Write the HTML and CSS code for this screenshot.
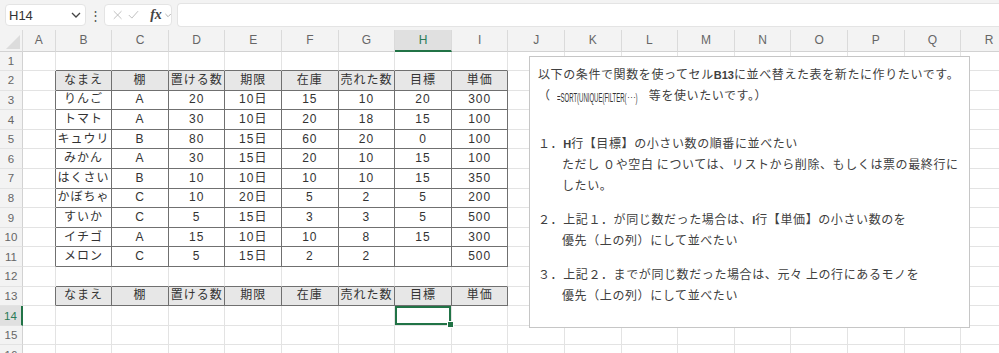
FILE: index.html
```html
<!DOCTYPE html>
<html lang="ja">
<head>
<meta charset="UTF-8">
<meta name="viewport" content="width=device-width, initial-scale=1.0">
<title>Sheet1</title>
<link rel="stylesheet" href="styles.css">
</head>
<body>
  <div class="bar">
    <div class="namebox">
      <span>H14</span>
      <svg width="10" height="6" viewBox="0 0 10 6"><polyline points="1,1 5,5 9,1" fill="none" stroke="#444" stroke-width="1.3"/></svg>
    </div>
    <div class="dots">⋮</div>
    <div class="fxbox">
      <svg width="12" height="12" viewBox="0 0 12 12"><path d="M1 1 L11 11 M11 1 L1 11" stroke="#b5b5b5" stroke-width="1.1"/></svg>
      <svg width="14" height="12" viewBox="0 0 14 12"><polyline points="1,6 5,10 13,1" fill="none" stroke="#b5b5b5" stroke-width="1.1"/></svg>
      <i class="fx">fx</i>
      <svg width="8" height="5" viewBox="0 0 8 5"><polyline points="0.5,0.5 4,4 7.5,0.5" fill="none" stroke="#999" stroke-width="1"/></svg>
    </div>
    <div class="input"></div>
  </div>

  <table class="sheet">
    <colgroup>
      <col class="w-rh"><col class="w-a">
      <col class="w"><col class="w"><col class="w"><col class="w"><col class="w"><col class="w"><col class="w"><col class="w"><col class="w">
      <col class="w"><col class="w"><col class="w"><col class="w"><col class="w"><col class="w"><col class="w"><col class="w">
    </colgroup>
    <tr class="head">
      <th class="corner"><span class="tri"></span></th>
      <th>A</th><th>B</th><th>C</th><th>D</th><th>E</th><th>F</th><th>G</th><th class="on">H</th><th>I</th>
      <th>J</th><th>K</th><th>L</th><th>M</th><th>N</th><th>O</th><th>P</th><th>Q</th><th>R</th>
    </tr>
    <tr>
      <th class="rn">1</th><td></td>
      <td class="tb"></td><td class="tb"></td><td class="tb"></td><td class="tb"></td><td class="tb"></td><td class="tb"></td><td class="tb"></td><td class="tb"></td>
      <td></td><td></td><td></td><td></td><td></td><td></td><td></td><td></td><td></td>
    </tr>
    <tr>
      <th class="rn">2</th><td class="lb"></td>
      <td class="h">なまえ</td><td class="h">棚</td><td class="h">置ける数</td><td class="h">期限</td><td class="h">在庫</td><td class="h">売れた数</td><td class="h">目標</td><td class="h">単価</td>
      <td></td><td></td><td></td><td></td><td></td><td></td><td></td><td></td><td></td>
    </tr>
    <tr>
      <th class="rn">3</th><td class="lb"></td>
      <td class="c">りんご</td><td class="c">A</td><td class="c">20</td><td class="c">10日</td><td class="c">15</td><td class="c">10</td><td class="c">20</td><td class="c">300</td>
      <td></td><td></td><td></td><td></td><td></td><td></td><td></td><td></td><td></td>
    </tr>
    <tr>
      <th class="rn">4</th><td class="lb"></td>
      <td class="c">トマト</td><td class="c">A</td><td class="c">30</td><td class="c">10日</td><td class="c">20</td><td class="c">18</td><td class="c">15</td><td class="c">100</td>
      <td></td><td></td><td></td><td></td><td></td><td></td><td></td><td></td><td></td>
    </tr>
    <tr>
      <th class="rn">5</th><td class="lb"></td>
      <td class="c">キュウリ</td><td class="c">B</td><td class="c">80</td><td class="c">15日</td><td class="c">60</td><td class="c">20</td><td class="c">0</td><td class="c">100</td>
      <td></td><td></td><td></td><td></td><td></td><td></td><td></td><td></td><td></td>
    </tr>
    <tr>
      <th class="rn">6</th><td class="lb"></td>
      <td class="c">みかん</td><td class="c">A</td><td class="c">30</td><td class="c">15日</td><td class="c">20</td><td class="c">10</td><td class="c">15</td><td class="c">100</td>
      <td></td><td></td><td></td><td></td><td></td><td></td><td></td><td></td><td></td>
    </tr>
    <tr>
      <th class="rn">7</th><td class="lb"></td>
      <td class="c">はくさい</td><td class="c">B</td><td class="c">10</td><td class="c">10日</td><td class="c">10</td><td class="c">10</td><td class="c">15</td><td class="c">350</td>
      <td></td><td></td><td></td><td></td><td></td><td></td><td></td><td></td><td></td>
    </tr>
    <tr>
      <th class="rn">8</th><td class="lb"></td>
      <td class="c">かぼちゃ</td><td class="c">C</td><td class="c">10</td><td class="c">20日</td><td class="c">5</td><td class="c">2</td><td class="c">5</td><td class="c">200</td>
      <td></td><td></td><td></td><td></td><td></td><td></td><td></td><td></td><td></td>
    </tr>
    <tr>
      <th class="rn">9</th><td class="lb"></td>
      <td class="c">すいか</td><td class="c">C</td><td class="c">5</td><td class="c">15日</td><td class="c">3</td><td class="c">3</td><td class="c">5</td><td class="c">500</td>
      <td></td><td></td><td></td><td></td><td></td><td></td><td></td><td></td><td></td>
    </tr>
    <tr>
      <th class="rn">10</th><td class="lb"></td>
      <td class="c">イチゴ</td><td class="c">A</td><td class="c">15</td><td class="c">10日</td><td class="c">10</td><td class="c">8</td><td class="c">15</td><td class="c">300</td>
      <td></td><td></td><td></td><td></td><td></td><td></td><td></td><td></td><td></td>
    </tr>
    <tr>
      <th class="rn">11</th><td class="lb"></td>
      <td class="c">メロン</td><td class="c">C</td><td class="c">5</td><td class="c">15日</td><td class="c">2</td><td class="c">2</td><td class="c"></td><td class="c">500</td>
      <td></td><td></td><td></td><td></td><td></td><td></td><td></td><td></td><td></td>
    </tr>
    <tr>
      <th class="rn">12</th><td></td>
      <td class="tb"></td><td class="tb"></td><td class="tb"></td><td class="tb"></td><td class="tb"></td><td class="tb"></td><td class="tb"></td><td class="tb"></td>
      <td></td><td></td><td></td><td></td><td></td><td></td><td></td><td></td><td></td>
    </tr>
    <tr>
      <th class="rn">13</th><td class="lb"></td>
      <td class="h">なまえ</td><td class="h">棚</td><td class="h">置ける数</td><td class="h">期限</td><td class="h">在庫</td><td class="h">売れた数</td><td class="h">目標</td><td class="h">単価</td>
      <td></td><td></td><td></td><td></td><td></td><td></td><td></td><td></td><td></td>
    </tr>
    <tr>
      <th class="rn on">14</th><td></td>
      <td></td><td></td><td></td><td></td><td></td><td></td><td class="sel"><span class="handle"></span></td><td></td>
      <td></td><td></td><td></td><td></td><td></td><td></td><td></td><td></td><td></td>
    </tr>
    <tr>
      <th class="rn">15</th><td></td>
      <td></td><td></td><td></td><td></td><td></td><td></td><td></td><td></td>
      <td></td><td></td><td></td><td></td><td></td><td></td><td></td><td></td><td></td>
    </tr>
    <tr>
      <th class="rn">16</th><td></td>
      <td></td><td></td><td></td><td></td><td></td><td></td><td></td><td></td>
      <td></td><td></td><td></td><td></td><td></td><td></td><td></td><td></td><td></td>
    </tr>
  </table>

  <!-- text box shape floating over the sheet -->
  <div class="note">
    <p>以下の条件で関数を使ってセル<b>B13</b>に並べ替えた表を新たに作りたいです。</p>
    <p class="gap1">（ <span class="narrow"><span>=SORT(UNIQUE(FILTER(･･･)</span></span>　 等を使いたいです。）</p>
    <p>１．<b>H</b>行【目標】の小さい数の順番に並べたい</p>
    <p class="ind">ただし ０や空白 については、リストから削除、もしくは票の最終行に</p>
    <p class="ind gap2">したい。</p>
    <p>２．上記１．が同じ数だった場合は、<b>I</b>行【単価】の小さい数のを</p>
    <p class="ind gap2">優先（上の列）にして並べたい</p>
    <p>３．上記２．までが同じ数だった場合は、元々 上の行にあるモノを</p>
    <p class="ind">優先（上の列）にして並べたい</p>
  </div>
</body>
</html>
```

FILE: styles.css
```css
body {
  margin: 0;
  font-family: "Liberation Sans", "Noto Sans CJK JP", sans-serif;
  background: #fff;
  overflow: hidden;
}

/* formula bar */
.bar {
  height: 30px;
  background: #f3f3f3;
  display: flex;
  align-items: center;
  padding-left: 5px;
}

.namebox {
  width: 81px;
  height: 22px;
  box-sizing: border-box;
  background: #fff;
  border: 1px solid #e4e4e4;
  border-radius: 4px;
  display: flex;
  align-items: center;
  justify-content: space-between;
  padding: 0 4px 0 3px;
  font-size: 13px;
  color: #333;
}

.dots {
  width: 18px;
  text-align: center;
  font-size: 13px;
  color: #555;
}

.fxbox {
  width: 68px;
  height: 22px;
  box-sizing: border-box;
  background: #fff;
  border: 1px solid #e4e4e4;
  border-radius: 4px;
  display: flex;
  align-items: center;
  gap: 6px;
  padding-left: 8px;
}

.fx {
  font-family: "Liberation Serif", serif;
  font-weight: bold;
  font-size: 14px;
  color: #444;
  margin-left: 5px;
  margin-right: -3px;
}

.input {
  flex: 1;
  height: 22px;
  margin-left: 5px;
  background: #fff;
  border: 1px solid #e4e4e4;
  border-right: none;
  border-radius: 4px 0 0 4px;
}

/* grid */
.sheet {
  border-collapse: separate;
  border-spacing: 0;
  table-layout: fixed;
  width: 1018px;
}

.w-rh { width: 23px; }
.w-a { width: 32.7px; }
.w { width: 56.6px; }

.sheet tr { height: 19.6px; }
.sheet tr.head { height: 21.5px; }

.sheet th {
  background: #f3f3f3;
  font-weight: normal;
  font-size: 12px;
  color: #666;
  padding: 0;
  border-right: 1px solid #dadada;
  border-bottom: 1px solid #d2d2d2;
}

.sheet th.rn {
  border-right-color: #d2d2d2;
  border-bottom-color: #e3e3e3;
  font-size: 11.5px;
}

.sheet th.on {
  background: #e0e0e0;
  color: #2a7b57;
}

.head th.on {
  border-bottom: 2px solid #217346;
}

.sheet th.rn.on {
  border-right: 2px solid #217346;
}

.corner {
  position: relative;
}

.tri {
  position: absolute;
  right: 2px;
  bottom: 2px;
  width: 0;
  height: 0;
  border-left: 14px solid transparent;
  border-bottom: 14px solid #dcdcdc;
}

.sheet td {
  padding: 0;
  border-right: 1px solid #e3e3e3;
  border-bottom: 1px solid #e3e3e3;
  text-align: center;
  font-size: 12px;
  letter-spacing: 1px;
  color: #333;
  white-space: nowrap;
  line-height: 17px;
}

.sheet td.lb { border-right-color: #707070; }
.sheet td.tb { border-bottom-color: #707070; }

.sheet td.c,
.sheet td.h {
  border-right-color: #707070;
  border-bottom-color: #707070;
}

.sheet td.h {
  background: #e7e7e7;
}

.sheet td.sel {
  position: relative;
  box-shadow: inset 0 0 0 2px #217346;
}

.handle {
  position: absolute;
  right: -3px;
  bottom: -3px;
  width: 5px;
  height: 5px;
  background: #217346;
  border: 1px solid #fff;
}

/* text box */
.note {
  position: absolute;
  left: 529px;
  top: 56px;
  width: 441px;
  height: 272px;
  box-sizing: border-box;
  background: #fff;
  border: 1px solid #c6c6c6;
  padding: 6px 0 0 8px;
  font-family: "Noto Sans CJK JP", sans-serif;
  font-size: 12px;
  letter-spacing: 0.6px;
  color: #404040;
}

.note p {
  margin: 0;
  height: 21px;
  line-height: 21px;
  white-space: nowrap;
}

.note b {
  font-family: "Liberation Sans", sans-serif;
  font-size: 11px;
  letter-spacing: 0;
}

.note .ind { padding-left: 24px; }
.note .gap1 { margin-bottom: 27px; }
.note .gap2 { margin-bottom: 13px; }

.narrow {
  display: inline-block;
  width: 76px;
  height: 14px;
  line-height: 14px;
  margin-left: 3px;
  white-space: nowrap;
  vertical-align: -2px;
}

.narrow span {
  display: inline-block;
  font-family: "Liberation Sans", sans-serif;
  font-size: 12px;
  letter-spacing: 0;
  color: #333;
  transform: scaleX(0.5);
  transform-origin: 0 50%;
}
```
